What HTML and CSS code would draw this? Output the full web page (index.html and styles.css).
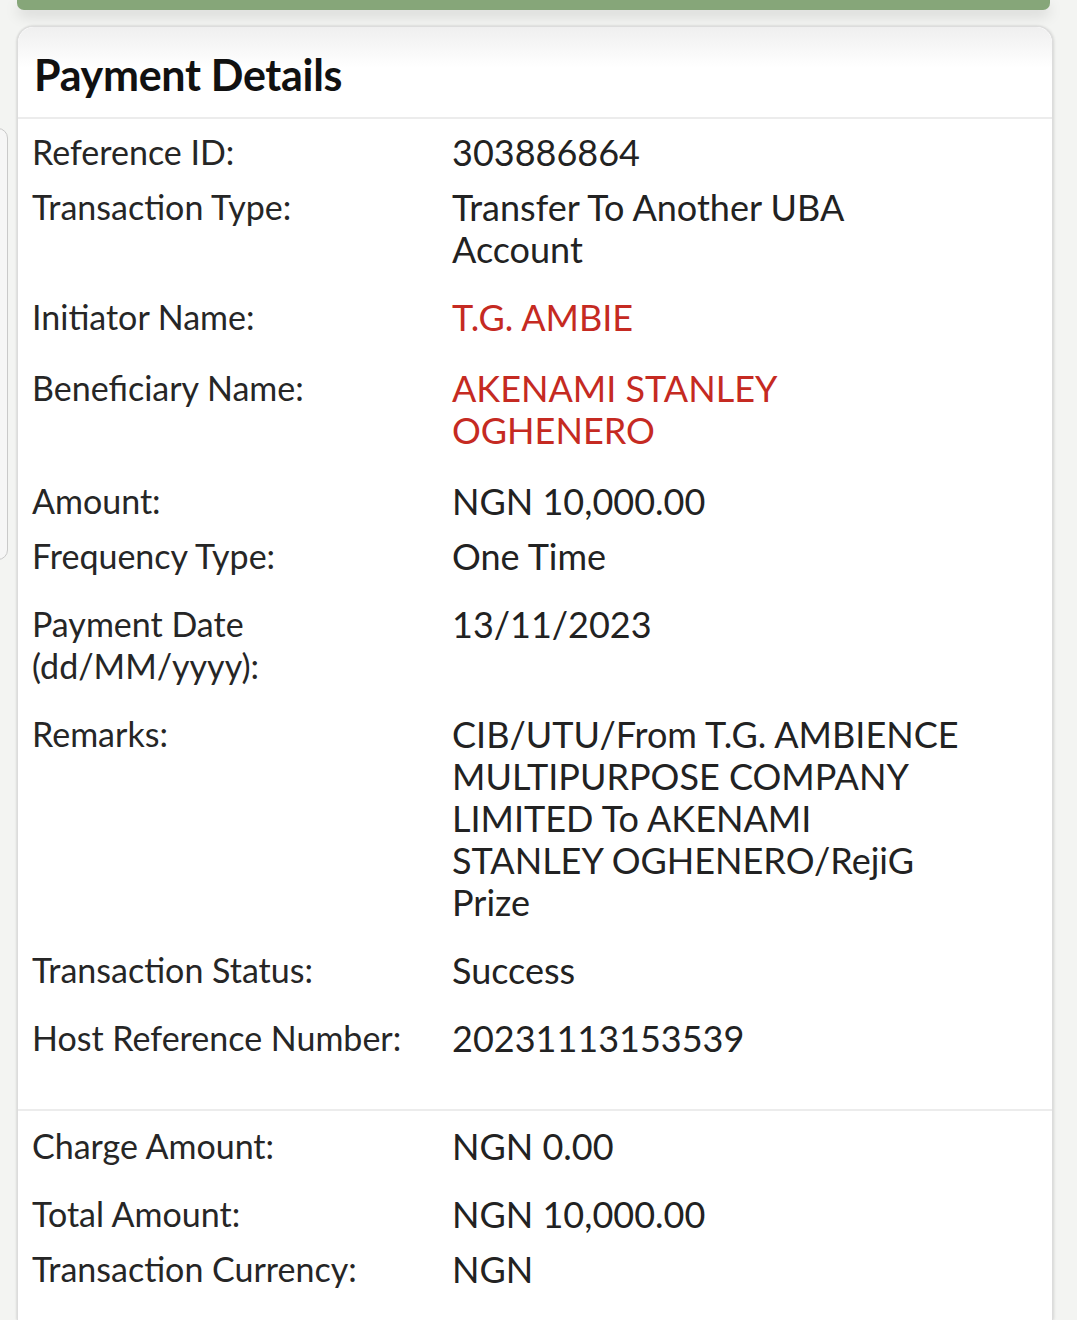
FILE: index.html
```html
<!DOCTYPE html>
<html lang="en">
<head>
<meta charset="utf-8">
<title>Payment Details</title>
<link rel="stylesheet" href="styles.css">
</head>
<body>
<div class="page">
  <div class="topbar"></div>
  <div class="side-tab"></div>
  <section class="card">
    <header class="card-header">
      <h2 class="card-title">Payment Details</h2>
    </header>
    <div class="details">
      <div class="row tight"><div class="label">Reference ID:</div><div class="value">303886864</div></div>
      <div class="row"><div class="label">Transaction Type:</div><div class="value">Transfer To Another UBA Account</div></div>
      <div class="row loose"><div class="label">Initiator Name:</div><div class="value red">T.G. AMBIE</div></div>
      <div class="row loose"><div class="label">Beneficiary Name:</div><div class="value red">AKENAMI STANLEY OGHENERO</div></div>
      <div class="row tight"><div class="label">Amount:</div><div class="value">NGN 10,000.00</div></div>
      <div class="row"><div class="label">Frequency Type:</div><div class="value">One Time</div></div>
      <div class="row"><div class="label">Payment Date (dd/MM/yyyy):</div><div class="value">13/11/2023</div></div>
      <div class="row"><div class="label">Remarks:</div><div class="value">CIB/UTU/From T.G. AMBIENCE MULTIPURPOSE COMPANY LIMITED To AKENAMI STANLEY OGHENERO/RejiG Prize</div></div>
      <div class="row"><div class="label">Transaction Status:</div><div class="value">Success</div></div>
      <div class="row"><div class="label">Host Reference Number:</div><div class="value">20231113153539</div></div>
    </div>
    <div class="details totals">
      <div class="row"><div class="label">Charge Amount:</div><div class="value">NGN 0.00</div></div>
      <div class="row tight"><div class="label">Total Amount:</div><div class="value">NGN 10,000.00</div></div>
      <div class="row"><div class="label">Transaction Currency:</div><div class="value">NGN</div></div>
    </div>
  </section>
</div>
</body>
</html>
```

FILE: styles.css
```css
* { box-sizing: border-box; }
html, body { margin: 0; padding: 0; }
body {
  background: #f3f4f2;
  font-family: Lato, "Open Sans", "Liberation Sans", sans-serif;
  color: #232323;
  width: 1077px;
  height: 1320px;
  overflow: hidden;
}
.page {
  position: relative;
  padding: 0 24px 0 17px;
}
.topbar {
  height: 10px;
  width: 1033px;
  background: #86a679;
  border-radius: 0 0 7px 7px;
  box-shadow: 0 6px 14px rgba(0,0,0,0.13);
}
.side-tab {
  position: absolute;
  left: -20px;
  top: 128px;
  width: 28px;
  height: 432px;
  border: 1px solid #c9c9c9;
  border-radius: 10px;
  background: #f6f6f6;
}
.card {
  position: relative;
  margin-top: 16px;
  width: 1036px;
  height: 1294px;
  overflow: hidden;
  background: #fff;
  border: 1px solid #dcdcdc;
  border-bottom: none;
  border-radius: 16px 16px 0 0;
  box-shadow: 1px 0 3px rgba(0,0,0,0.12), -1px 0 2px rgba(0,0,0,0.08);
}
.card-header {
  height: 92px;
  border-radius: 16px 16px 0 0;
  background: linear-gradient(#efefef, #ffffff 45%);
  border-bottom: 2px solid #ececec;
  padding: 22px 0 0 16px;
}
.card-title {
  margin: 0;
  font-size: 43px;
  line-height: 52px;
  font-weight: 700;
  color: #111;
  letter-spacing: -0.3px;
}
.details {
  padding: 12px 0 24px 0;
}
.totals {
  border-top: 2px solid #ececec;
  padding-top: 14px;
}
.row {
  display: grid;
  grid-template-columns: 434px 518px;
  padding-bottom: 26px;
  line-height: 42px;
}
.row.tight { padding-bottom: 13px; }
.row.loose { padding-bottom: 29px; }
.label {
  padding-left: 14px;
  padding-right: 30px;
  font-size: 34px;
  color: #262626;
}
.value {
  font-size: 36px;
  color: #222;
}
.value.red { color: #c52a22; }
```
